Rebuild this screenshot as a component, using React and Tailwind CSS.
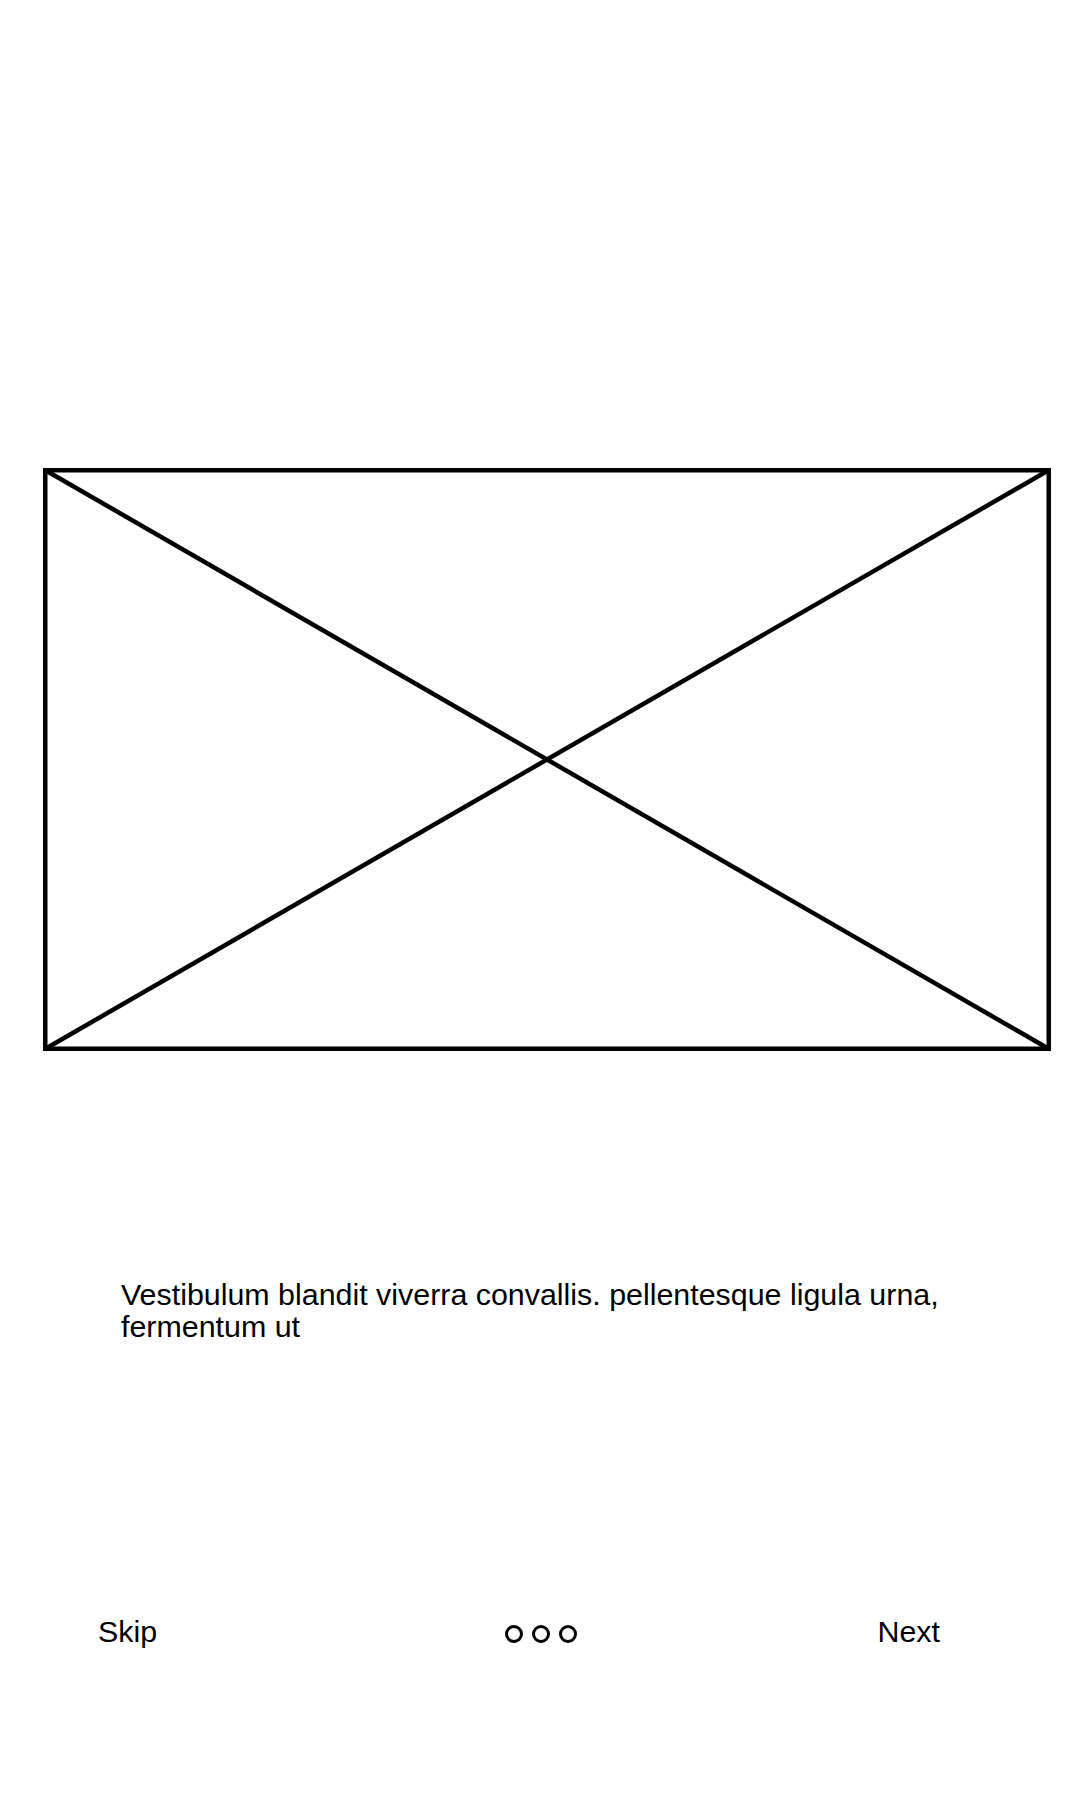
export default function App() {
  const font = { fontFamily: '"Liberation Sans", Arial, sans-serif' };
  return (
    <div className="w-[1080px] h-[1800px] bg-white text-black" style={font}>
      <div className="pt-[468px] pl-[43px]">
        <svg width="1008" height="583" viewBox="0 0 1008 583" className="block">
          <rect x="2.25" y="2.25" width="1003.5" height="578.5" fill="none" stroke="#000" strokeWidth="4.5" />
          <line x1="2" y1="2" x2="1006" y2="581" stroke="#000" strokeWidth="4.5" />
          <line x1="1006" y1="2" x2="2" y2="581" stroke="#000" strokeWidth="4.5" />
        </svg>
      </div>
      <div className="mt-[227px] ml-[121px] w-[840px] text-[30.4px] leading-[32px]">
        Vestibulum blandit viverra convallis. pellentesque ligula urna, fermentum ut
      </div>
      <div className="mt-[273px] flex items-center pl-[98px] pr-[140px] text-[30.4px] leading-[32px]">
        <span className="w-[407px]">Skip</span>
        <div className="flex items-center gap-[9px] mt-[6px]">
          <span className="block w-[18px] h-[18px] rounded-full border-[3px] border-black" />
          <span className="block w-[18px] h-[18px] rounded-full border-[3px] border-black" />
          <span className="block w-[18px] h-[18px] rounded-full border-[3px] border-black" />
        </div>
        <span className="ml-auto">Next</span>
      </div>
    </div>
  );
}
